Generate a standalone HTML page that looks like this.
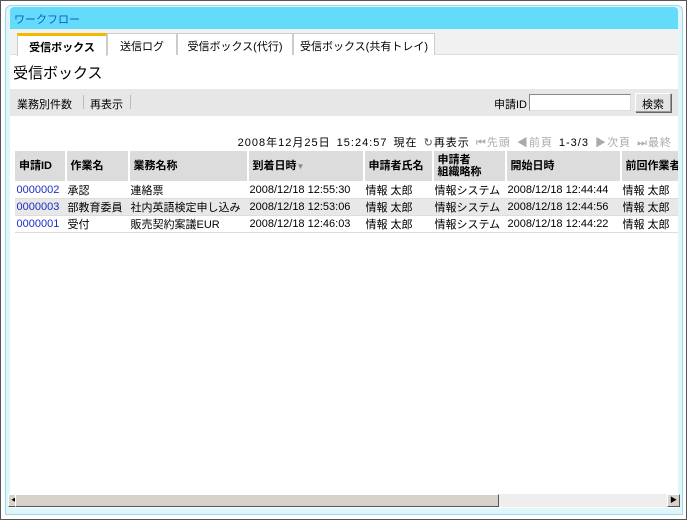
<!DOCTYPE html>
<html><head><meta charset="utf-8"><style>
*{margin:0;padding:0;box-sizing:border-box}
body{width:687px;height:520px;background:#fff;font-family:"Liberation Sans","Noto Sans CJK JP",sans-serif;font-size:11px;color:#000;position:relative;overflow:hidden}
.outer{position:absolute;left:0;top:0;width:687px;height:520px;border:1px solid #555;background:#fff}
.frame{position:absolute;left:5px;top:5px;width:678px;height:510px;background:#dff7fb;border:1px solid #9fd8e8;border-radius:6px 6px 0 0}
.title{position:absolute;left:10px;top:7px;width:668px;height:22px;background:#63dcfb;color:#1a55c8;font-size:11px;padding:4px 4px;border-radius:4px 4px 0 0}
.content{position:absolute;left:10px;top:29px;width:668px;height:479px;background:#fff;overflow:hidden}
.tabs{position:absolute;left:0;top:0;width:668px;height:26px;background:#f1f1f1;border-bottom:1px solid #ddd}
.tab{position:absolute;top:4px;height:22px;background:#fff;border:1px solid #ccc;border-bottom:none;padding:4px 0;text-align:center;font-size:11px}
.tab.on{border-top:3px solid #f5b800;padding-top:3px;font-weight:bold;height:23px}
h1{position:absolute;left:3px;top:33px;font-size:15px;font-weight:normal}
.tool{position:absolute;left:0;top:60px;width:668px;height:27px;background:#e7e7e7}
.tool span{position:absolute;top:7px}
.sep{position:absolute;top:6px;width:1px;height:14px;background:#bbb}
.inp{position:absolute;left:519px;top:5px;width:102px;height:17px;border:1px solid #888;border-right-color:#ddd;border-bottom-color:#ddd;background:#fff}
.btn{position:absolute;left:625px;top:4px;width:36px;height:19px;background:#e4e4e4;border:1px solid #999;border-top-color:#fff;border-left-color:#fff;box-shadow:1px 1px 0 #666;text-align:center;padding-top:2px}
.date{position:absolute;top:105px;right:6px;white-space:nowrap;letter-spacing:1px;word-spacing:2px}
.dim{color:#aaa}
table{position:absolute;left:4px;top:121px;border-collapse:collapse;width:720px;table-layout:fixed}
th{background:#dcdcdc;border:1px solid #fff;border-right:2px solid #fff;height:31px;text-align:left;padding:0 4px;font-size:11px;font-weight:bold;line-height:12px}
td{height:17px;padding:0 2px;white-space:nowrap;overflow:hidden;border-bottom:1px solid #ddd;font-size:11px}
tr.g td{background:#e8e8e8}
a{color:#1a2fbf;text-decoration:none}
.sb{position:absolute;left:8px;top:494px;width:672px;height:13px;background:#eee}
.thumb{position:absolute;left:15px;top:494px;width:484px;height:13px;background:#d6d2cb;border:1px solid #fff;border-right-color:#555;border-bottom-color:#555}
.ar{position:absolute;top:494px;width:13px;height:13px;background:#d6d2cb;border:1px solid #fff;border-right-color:#555;border-bottom-color:#555;font-size:7px;text-align:center;line-height:11px}
</style></head><body>
<div class="outer"></div>
<div class="frame"></div>
<div class="title">ワークフロー</div>
<div class="content">
 <div class="tabs">
  <div class="tab on" style="left:7px;width:90px">受信ボックス</div>
  <div class="tab" style="left:97px;width:70px">送信ログ</div>
  <div class="tab" style="left:167px;width:116px">受信ボックス(代行)</div>
  <div class="tab" style="left:283px;width:142px">受信ボックス(共有トレイ)</div>
 </div>
 <h1>受信ボックス</h1>
 <div class="tool">
  <span style="left:7px">業務別件数</span><div class="sep" style="left:73px"></div>
  <span style="left:80px">再表示</span><div class="sep" style="left:120px"></div>
  <span style="left:484px">申請ID</span><div class="inp"></div><div class="btn">検索</div>
 </div>
 <div class="date">2008年12月25日 15:24:57 現在 <span style="color:#555">↻</span>再表示 <span class="dim">⏮先頭 ◀前頁</span> 1-3/3 <span class="dim">▶次頁 ⏭最終</span></div>
 <table>
  <colgroup><col style="width:51px"><col style="width:63px"><col style="width:119px"><col style="width:116px"><col style="width:69px"><col style="width:73px"><col style="width:115px"><col style="width:114px"></colgroup>
  <tr><th>申請ID</th><th>作業名</th><th>業務名称</th><th>到着日時<span style="color:#888;font-size:8px">▼</span></th><th>申請者氏名</th><th>申請者<br>組織略称</th><th>開始日時</th><th>前回作業者</th></tr>
  <tr><td><a>0000002</a></td><td>承認</td><td>連絡票</td><td>2008/12/18 12:55:30</td><td>情報 太郎</td><td>情報システム</td><td>2008/12/18 12:44:44</td><td>情報 太郎</td></tr>
  <tr class="g"><td><a>0000003</a></td><td>部教育委員</td><td>社内英語検定申し込み</td><td>2008/12/18 12:53:06</td><td>情報 太郎</td><td>情報システム</td><td>2008/12/18 12:44:56</td><td>情報 太郎</td></tr>
  <tr><td><a>0000001</a></td><td>受付</td><td>販売契約案議EUR</td><td>2008/12/18 12:46:03</td><td>情報 太郎</td><td>情報システム</td><td>2008/12/18 12:44:22</td><td>情報 太郎</td></tr>
 </table>
</div>
<div class="sb"></div>
<div class="ar" style="left:8px">◀</div>
<div class="thumb"></div>
<div class="ar" style="left:667px">▶</div>
</body></html>
